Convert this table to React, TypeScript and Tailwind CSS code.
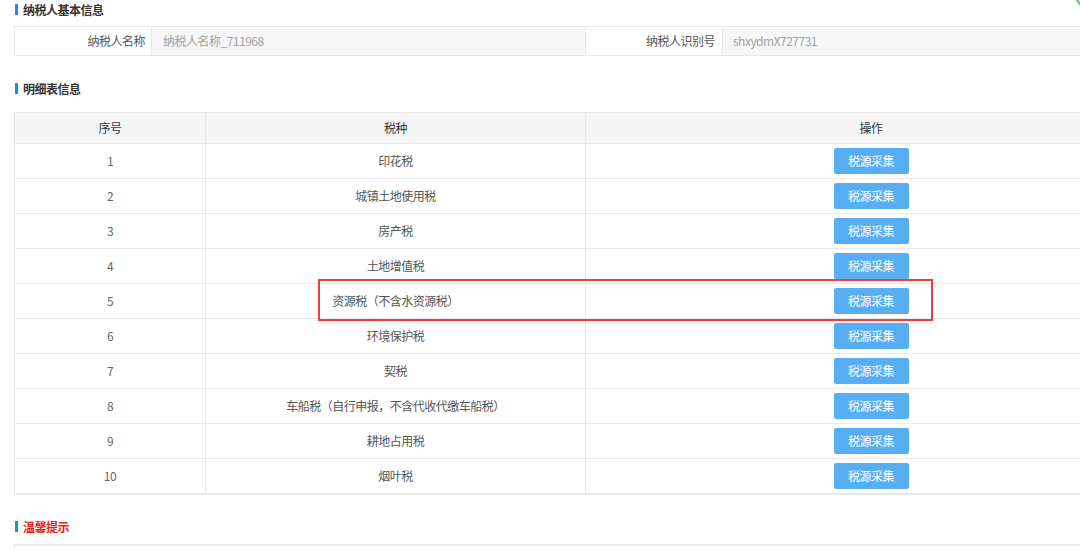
import React from 'react';

const rows = [
  '印花税',
  '城镇土地使用税',
  '房产税',
  '土地增值税',
  '资源税（不含水资源税）',
  '环境保护税',
  '契税',
  '车船税（自行申报，不含代收代缴车船税）',
  '耕地占用税',
  '烟叶税',
];

function SectionTitle({ text, red }: { text: string; red?: boolean }) {
  return (
    <div className="flex items-center h-[19px] pl-[15px]">
      <span className="w-[3px] h-[11px] bg-[#1a8cf0] mr-[5px]" />
      <span
        className={
          red
            ? 'text-[12px] font-bold text-[#f01818] tracking-[-0.5px]'
            : 'text-[12px] font-bold text-[#333] tracking-[-0.5px]'
        }
      >
        {text}
      </span>
    </div>
  );
}

export default function App() {
  return (
    <div
      className="relative w-[1080px] h-[552px] overflow-hidden bg-white text-[12px] text-[#555] tracking-[-0.5px]"
      style={{ fontFamily: '"Noto Sans CJK SC", "Noto Sans", sans-serif' }}
    >
      {/* corner widget */}
      <svg className="absolute top-[-26px] right-[-30px]" width="40" height="40" viewBox="0 0 40 40">
        <circle cx="20" cy="20" r="15" fill="white" stroke="#e9f3ea" strokeWidth="4" />
        <circle cx="20" cy="20" r="14" fill="none" stroke="#4cc46a" strokeWidth="2" />
      </svg>

      <SectionTitle text="纳税人基本信息" />

      {/* basic info */}
      <div className="ml-[14px] mt-[7px] w-[1142px] h-[30px] border-y border-l border-[#e8e8e8] flex">
        <div className="w-[136px] flex items-center justify-end pr-[6px] text-[#555]">纳税人名称</div>
        <div className="w-[434px] flex items-center pl-[11px] bg-[#f7f7f7] border-l border-[#e8e8e8] text-[#a0a0a0]">
          纳税人名称_711968
        </div>
        <div className="w-[137px] flex items-center justify-end pr-[7px] border-l border-[#e8e8e8] text-[#555]">
          纳税人识别号
        </div>
        <div className="flex-1 flex items-center pl-[10px] bg-[#f7f7f7] border-l border-[#e8e8e8] text-[#a0a0a0]">
          shxydmX727731
        </div>
      </div>

      <div className="mt-[23px]">
        <SectionTitle text="明细表信息" />
      </div>

      {/* detail table */}
      <div className="ml-[14px] mt-[14px] w-[1142px] border-t border-l border-[#e8e8e8]">
        <div className="grid grid-cols-[190px_380px_571px] h-[31px] bg-[#f5f5f5] border-b border-[#e8e8e8] text-[#333]">
          <div className="flex items-center justify-center">序号</div>
          <div className="flex items-center justify-center border-l border-[#e8e8e8]">税种</div>
          <div className="flex items-center justify-center border-l border-[#e8e8e8]">操作</div>
        </div>
        {rows.map((name, i) => (
          <div
            key={name}
            className={
              i === rows.length - 1
                ? 'grid grid-cols-[190px_380px_571px] h-[36px] border-b-2 border-[#e8e8e8]'
                : 'grid grid-cols-[190px_380px_571px] h-[35px] border-b border-[#e8e8e8]'
            }
          >
            <div className="flex items-center justify-center text-[#666]">{i + 1}</div>
            <div className="flex items-center justify-center border-l border-[#e8e8e8]">{name}</div>
            <div className="flex items-center justify-center border-l border-[#e8e8e8]">
              <button className="w-[75px] h-[26px] rounded-[2px] bg-[#58aef4] text-white text-[12px] tracking-[-0.5px]">
                税源采集
              </button>
            </div>
          </div>
        ))}
      </div>

      <div className="mt-[22px]">
        <SectionTitle text="温馨提示" red />
      </div>

      <div className="ml-[14px] mt-[8px] w-[1142px] h-[40px] border-t-2 border-l border-[#ececec]" />

      {/* annotation */}
      <div className="absolute left-[318px] top-[279px] w-[615px] h-[42px] border-2 border-[#f03c3c]" />
    </div>
  );
}
